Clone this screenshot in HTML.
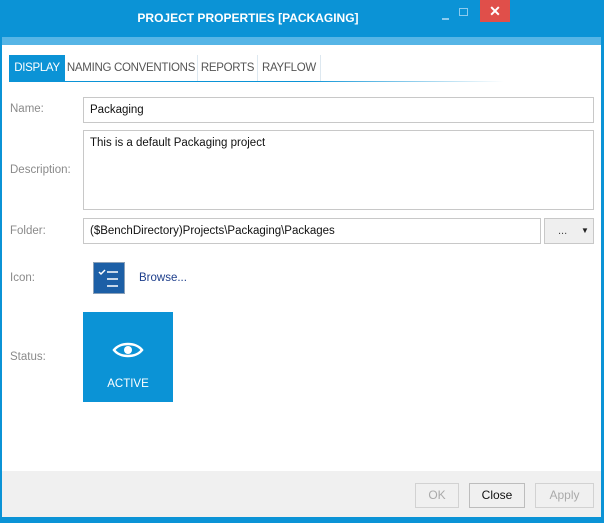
<!DOCTYPE html><html><head><style>
*{margin:0;padding:0;box-sizing:border-box}
body{width:604px;height:523px;position:relative;overflow:hidden;background:#fff;font-family:"Liberation Sans",sans-serif;font-size:12px}
.a{position:absolute;white-space:nowrap}
.lbl{color:#8a8a8a;font-size:11.5px}
.in{border:1px solid #c8c8c8;background:#fff;color:#111;padding:6px 6px;font-size:11.5px}
.tab{top:55px;height:26px;line-height:26px;text-align:center;color:#555;font-size:11.5px;letter-spacing:-0.3px;border-right:1px solid #dde8f0}
.btn{top:483px;height:25px;border:1px solid #d2d2d2;background:#f0f0f0;text-align:center;line-height:23px;color:#aaa;font-size:12px}
</style></head><body>
<div class="a" style="left:0;top:0;width:604px;height:37px;background:#0b93d6"></div>
<div class="a" style="left:0;top:37px;width:604px;height:8px;background:#56b5e6"></div>
<div class="a" style="left:0;top:0;width:2px;height:523px;background:#0b93d6"></div>
<div class="a" style="left:601px;top:0;width:3px;height:523px;background:#0b93d6"></div>
<div class="a" style="left:0;top:517px;width:604px;height:6px;background:#0b93d6"></div>
<div class="a" style="left:0;top:9px;width:496px;text-align:center;color:#fff;font-weight:bold;font-size:12px;line-height:18px">PROJECT PROPERTIES [PACKAGING]</div>
<div class="a" style="left:442px;top:18px;width:7px;height:2px;background:#8ccbee"></div>
<div class="a" style="left:459px;top:8px;width:9px;height:8px;border:1px solid #8ccbee"></div>
<div class="a" style="left:480px;top:0;width:30px;height:22px;background:#e04f4a;color:#fff;text-align:center;line-height:22px;font-size:14px;font-weight:bold">✕</div>
<div class="a tab" style="left:9px;width:56px;background:#0b93d6;color:#fff;border:none">DISPLAY</div>
<div class="a tab" style="left:65px;width:133px">NAMING CONVENTIONS</div>
<div class="a tab" style="left:198px;width:60px">REPORTS</div>
<div class="a tab" style="left:258px;width:63px">RAYFLOW</div>
<div class="a" style="left:9px;top:81px;width:495px;height:1px;background:linear-gradient(90deg,#0b93d6,#0b93d6 60%,#fff)"></div>
<div class="a lbl" style="left:10px;top:103px">Name:</div>
<div class="a in" style="left:83px;top:97px;width:511px;height:26px">Packaging</div>
<div class="a lbl" style="left:10px;top:164px">Description:</div>
<div class="a in" style="left:83px;top:130px;width:511px;height:80px">This is a default Packaging project</div>
<div class="a lbl" style="left:10px;top:225px">Folder:</div>
<div class="a in" style="left:83px;top:218px;width:458px;height:26px">($BenchDirectory)Projects\Packaging\Packages</div>
<div class="a" style="left:544px;top:218px;width:50px;height:26px;border:1px solid #c8c8c8;background:#efefef"><span class="a" style="left:13px;top:6px;font-size:11px;color:#444">...</span><span class="a" style="left:36px;top:7px;font-size:8px;color:#222">▼</span></div>
<div class="a lbl" style="left:10px;top:272px">Icon:</div>
<div class="a" style="left:93px;top:262px;width:32px;height:32px;background:#1c5fa6;border:1px solid #8aa0b8">
<svg width="30" height="30" class="a" style="left:0;top:0"><path d="M5 9l2 2 4-4" stroke="#fff" stroke-width="1.5" fill="none"/><path d="M13 9h11M13 16h11M13 23h11" stroke="#fff" stroke-width="1.5"/></svg></div>
<div class="a" style="left:139px;top:272px;color:#1e3f8c;font-size:11.5px">Browse...</div>
<div class="a lbl" style="left:10px;top:351px">Status:</div>
<div class="a" style="left:83px;top:312px;width:90px;height:90px;background:#0b93d6">
<svg class="a" style="left:29px;top:28px" width="32" height="20"><path d="M2 10C8 2 24 2 30 10C24 18 8 18 2 10Z" stroke="#fff" stroke-width="2.5" fill="none"/><circle cx="16" cy="10" r="4" fill="#fff"/></svg>
<div class="a" style="left:0;top:66px;width:90px;text-align:center;color:#fff;font-size:11.5px">ACTIVE</div></div>
<div class="a" style="left:2px;top:471px;width:599px;height:46px;background:#f0f0f0"></div>
<div class="a btn" style="left:415px;width:44px">OK</div>
<div class="a btn" style="left:469px;width:56px;color:#111;border-color:#bdbdbd">Close</div>
<div class="a btn" style="left:535px;width:59px">Apply</div>
</body></html>
